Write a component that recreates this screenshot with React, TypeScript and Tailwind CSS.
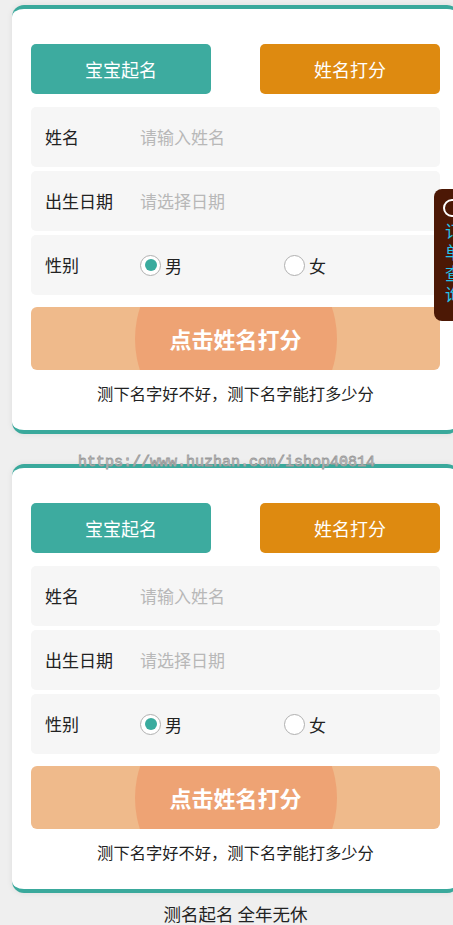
import React from "react";

const font = "font-['Noto_Sans_CJK_SC','Noto_Sans',sans-serif]";

function Radio({ checked, label }: { checked: boolean; label: string }) {
  return (
    <div className="flex items-center gap-[4px]">
      <div className="w-[21px] h-[21px] rounded-full border-[1.5px] border-[#b0b0b0] bg-white flex items-center justify-center">
        {checked && <div className="w-[12px] h-[12px] rounded-full bg-[#3aab9e]" />}
      </div>
      <span className="text-[17px] text-[#222] leading-none">{label}</span>
    </div>
  );
}

function Card() {
  return (
    <div className="ml-[12px] w-[447px] shrink-0 bg-white rounded-[12px] border-t-4 border-b-4 border-[#3aa99c] shadow-[0_0_6px_rgba(0,0,0,0.08)] px-[19px] pt-[35px] pb-[26px]">
      <div className="flex justify-between">
        <button className="w-[180px] h-[50px] rounded-[5px] bg-[#3dab9f] text-white text-[18px]">宝宝起名</button>
        <button className="w-[180px] h-[50px] rounded-[5px] bg-[#de8a10] text-white text-[18px]">姓名打分</button>
      </div>
      <div className="mt-[13px] flex flex-col gap-[4px]">
        <div className="h-[60px] rounded-[5px] bg-[#f6f6f6] flex items-center pl-[14px]">
          <span className="w-[95px] text-[17px] text-[#222]">姓名</span>
          <span className="text-[17px] text-[#b8b8b8]">请输入姓名</span>
        </div>
        <div className="h-[60px] rounded-[5px] bg-[#f6f6f6] flex items-center pl-[14px]">
          <span className="w-[95px] text-[17px] text-[#222]">出生日期</span>
          <span className="text-[17px] text-[#b8b8b8]">请选择日期</span>
        </div>
        <div className="h-[60px] rounded-[5px] bg-[#f6f6f6] flex items-center pl-[14px]">
          <span className="w-[95px] text-[17px] text-[#222]">性别</span>
          <div className="w-[144px]">
            <Radio checked label="男" />
          </div>
          <Radio checked={false} label="女" />
        </div>
      </div>
      <button className="relative mt-[12px] w-full h-[63px] rounded-[6px] bg-[#efba8b] overflow-hidden flex items-center justify-center">
        <div className="absolute left-1/2 top-1/2 -translate-x-1/2 -translate-y-1/2 w-[202px] h-[202px] rounded-full bg-[#eea374]" />
        <span className="relative text-white text-[22px] font-bold">点击姓名打分</span>
      </button>
      <div className="mt-[12px] text-center text-[16.3px] leading-[22px] text-[#222]">测下名字好不好，测下名字能打多少分</div>
    </div>
  );
}

export default function App() {
  return (
    <div className={`relative w-[453px] min-h-[925px] overflow-hidden bg-[#efefef] ${font}`}>
      <div className="pt-[5px] flex flex-col gap-[30px]">
        <Card />
        <Card />
      </div>
      <div className="ml-[12px] w-[447px] mt-[9px] text-center text-[17.5px] leading-[24px] text-[#222]">测名起名 全年无休</div>

      {/* floating side tab */}
      <div className="absolute left-[434px] top-[189px] w-[40px] h-[132px] rounded-l-[8px] bg-[#4c1805] pl-[9px] pt-[10px]">
        <div className="w-[18px] h-[18px] rounded-full border-2 border-white" />
        <div className="mt-[6px] [writing-mode:vertical-rl] text-[17px] leading-[20px] tracking-[4px] text-[#22c4ea]">
          订单查询
        </div>
      </div>

      {/* watermark */}
      <div className="absolute left-[78px] top-[453px] font-['Liberation_Mono',monospace] text-[15px] leading-[20px] text-[#d6d6d6] [-webkit-text-stroke:0.8px_#9a9a9a]">
        https://www.huzhan.com/ishop40814
      </div>
    </div>
  );
}
